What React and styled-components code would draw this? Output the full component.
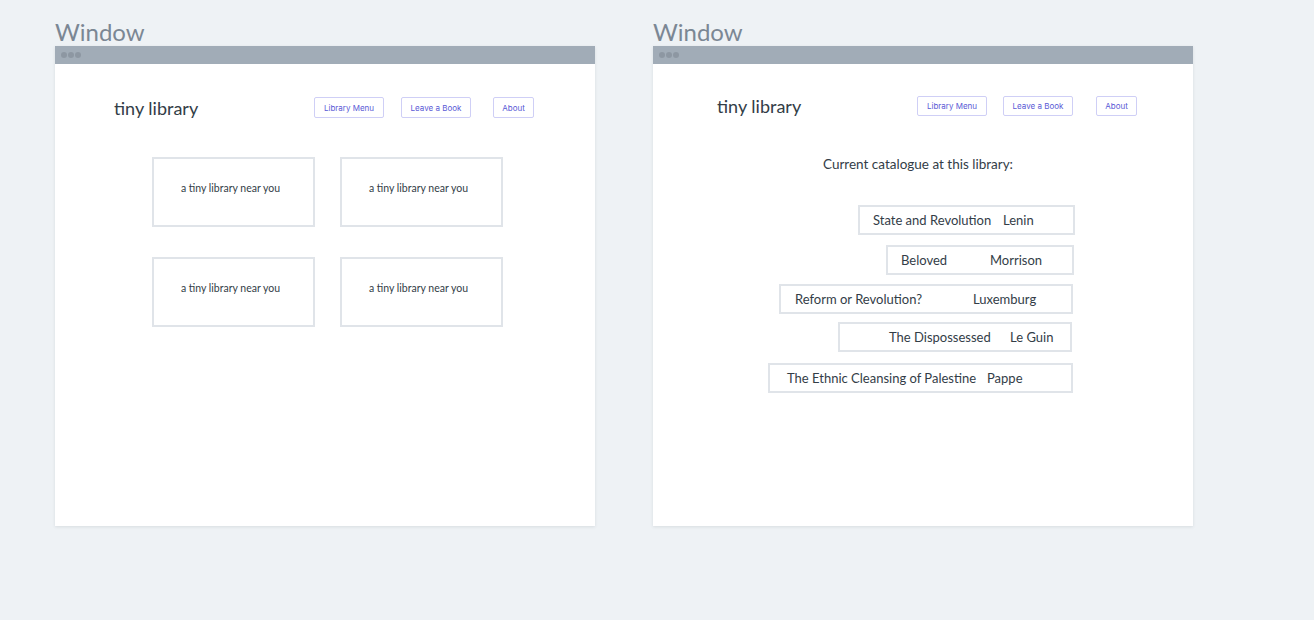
import styled, { createGlobalStyle } from "styled-components";

const GlobalStyle = createGlobalStyle`
  html, body {
    margin: 0;
    background: #eef2f5;
  }
  body {
    font-family: Lato, "Noto Sans", sans-serif;
    color: #333d47;
  }
`;

const Page = styled.div`
  display: flex;
  gap: 58px;
  padding: 17px 0 0 55px;
  height: 620px;
  box-sizing: border-box;
`;

const Column = styled.div`
  display: flex;
  flex-direction: column;
`;

const Label = styled.div`
  font-family: Lato, sans-serif;
  font-size: 24px;
  line-height: 29px;
  color: #7b8794;
`;

const Frame = styled.div`
  width: 540px;
  height: 480px;
  background: #fff;
  box-shadow: 0 1px 3px rgba(60, 70, 80, 0.12);
  display: flex;
  flex-direction: column;
`;

const TitleBar = styled.div`
  height: 18px;
  background: #a1acb7;
  display: flex;
  align-items: center;
  gap: 1px;
  padding-left: 6px;
`;

const Dot = styled.span`
  width: 6px;
  height: 6px;
  border-radius: 50%;
  background: #8d97a2;
`;

const Header = styled.div`
  display: flex;
  align-items: center;
  justify-content: space-between;
  padding: ${(p) => p.$top}px ${(p) => p.$right}px 0 ${(p) => p.$left}px;
`;

const Brand = styled.div`
  font-size: 18px;
  line-height: 20px;
  color: #333d47;
`;

const Nav = styled.div`
  display: flex;
  gap: ${(p) => p.$gap}px;
`;

const NavButton = styled.button`
  height: ${(p) => p.$h}px;
  width: ${(p) => p.$w}px;
  margin-left: ${(p) => p.$extra || 0}px;
  padding: 0;
  background: #fff;
  border: 1.5px solid #cfcff6;
  border-radius: 2px;
  font-family: Inter, sans-serif;
  font-size: 8px;
  color: #5a5ad6;
`;

const CardGrid = styled.div`
  display: grid;
  grid-template-columns: repeat(2, 163px);
  column-gap: 25px;
  row-gap: 30px;
  margin: 39px 0 0 97px;
`;

const Card = styled.div`
  height: 70px;
  box-sizing: border-box;
  border: 2px solid #e0e4e9;
  display: flex;
  justify-content: center;
  padding: 23px 6px 0 0;
  font-size: 10.5px;
  color: #333d47;
`;

const Heading = styled.div`
  text-align: center;
  margin: 40px 10px 0 0;
  font-size: 13.5px;
  line-height: 16px;
  color: #333d47;
`;

const BookList = styled.div`
  display: flex;
  flex-direction: column;
  align-items: flex-end;
  padding-right: 119px;
  margin-top: 33px;
`;

const BookRow = styled.div`
  width: ${(p) => p.$w}px;
  height: 30px;
  margin-top: ${(p) => p.$mt}px;
  margin-right: ${(p) => p.$mr}px;
  box-sizing: border-box;
  border: 2px solid #e0e4e9;
  display: flex;
  align-items: center;
  padding-left: ${(p) => p.$pl}px;
  font-size: 13px;
  color: #333d47;
`;

const BookTitle = styled.span`
  width: ${(p) => p.$w}px;
  flex-shrink: 0;
  white-space: nowrap;
`;

const Author = styled.span`
  white-space: nowrap;
`;

const books = [
  { title: "State and Revolution", author: "Lenin", w: 217, mt: 0, mr: -1, pl: 13, tw: 130 },
  { title: "Beloved", author: "Morrison", w: 188, mt: 10, mr: 0, pl: 13, tw: 89 },
  { title: "Reform or Revolution?", author: "Luxemburg", w: 294, mt: 9, mr: 1, pl: 14, tw: 178 },
  { title: "The Dispossessed", author: "Le Guin", w: 234, mt: 8, mr: 2, pl: 49, tw: 121 },
  { title: "The Ethnic Cleansing of Palestine", author: "Pappe", w: 305, mt: 11, mr: 1, pl: 17, tw: 200 },
];

function TopNav({ h, gap, extra, top, left, right }) {
  return (
    <Header $top={top} $left={left} $right={right}>
      <Brand>tiny library</Brand>
      <Nav $gap={gap}>
        <NavButton $h={h} $w={70}>Library Menu</NavButton>
        <NavButton $h={h} $w={70}>Leave a Book</NavButton>
        <NavButton $h={h} $w={41} $extra={extra}>About</NavButton>
      </Nav>
    </Header>
  );
}

function Window({ children }) {
  return (
    <Column>
      <Label>Window</Label>
      <Frame>
        <TitleBar>
          <Dot />
          <Dot />
          <Dot />
        </TitleBar>
        {children}
      </Frame>
    </Column>
  );
}

export default function App() {
  return (
    <>
      <GlobalStyle />
      <Page>
        <Window>
          <TopNav h={21} gap={17} extra={5} top={33} left={59} right={61} />
          <CardGrid>
            {[0, 1, 2, 3].map((i) => (
              <Card key={i}>a tiny library near you</Card>
            ))}
          </CardGrid>
        </Window>
        <Window>
          <TopNav h={20} gap={16} extra={7} top={32} left={64} right={56} />
          <Heading>Current catalogue at this library:</Heading>
          <BookList>
            {books.map((b) => (
              <BookRow key={b.title} $w={b.w} $mt={b.mt} $mr={b.mr} $pl={b.pl}>
                <BookTitle $w={b.tw}>{b.title}</BookTitle>
                <Author>{b.author}</Author>
              </BookRow>
            ))}
          </BookList>
        </Window>
      </Page>
    </>
  );
}
